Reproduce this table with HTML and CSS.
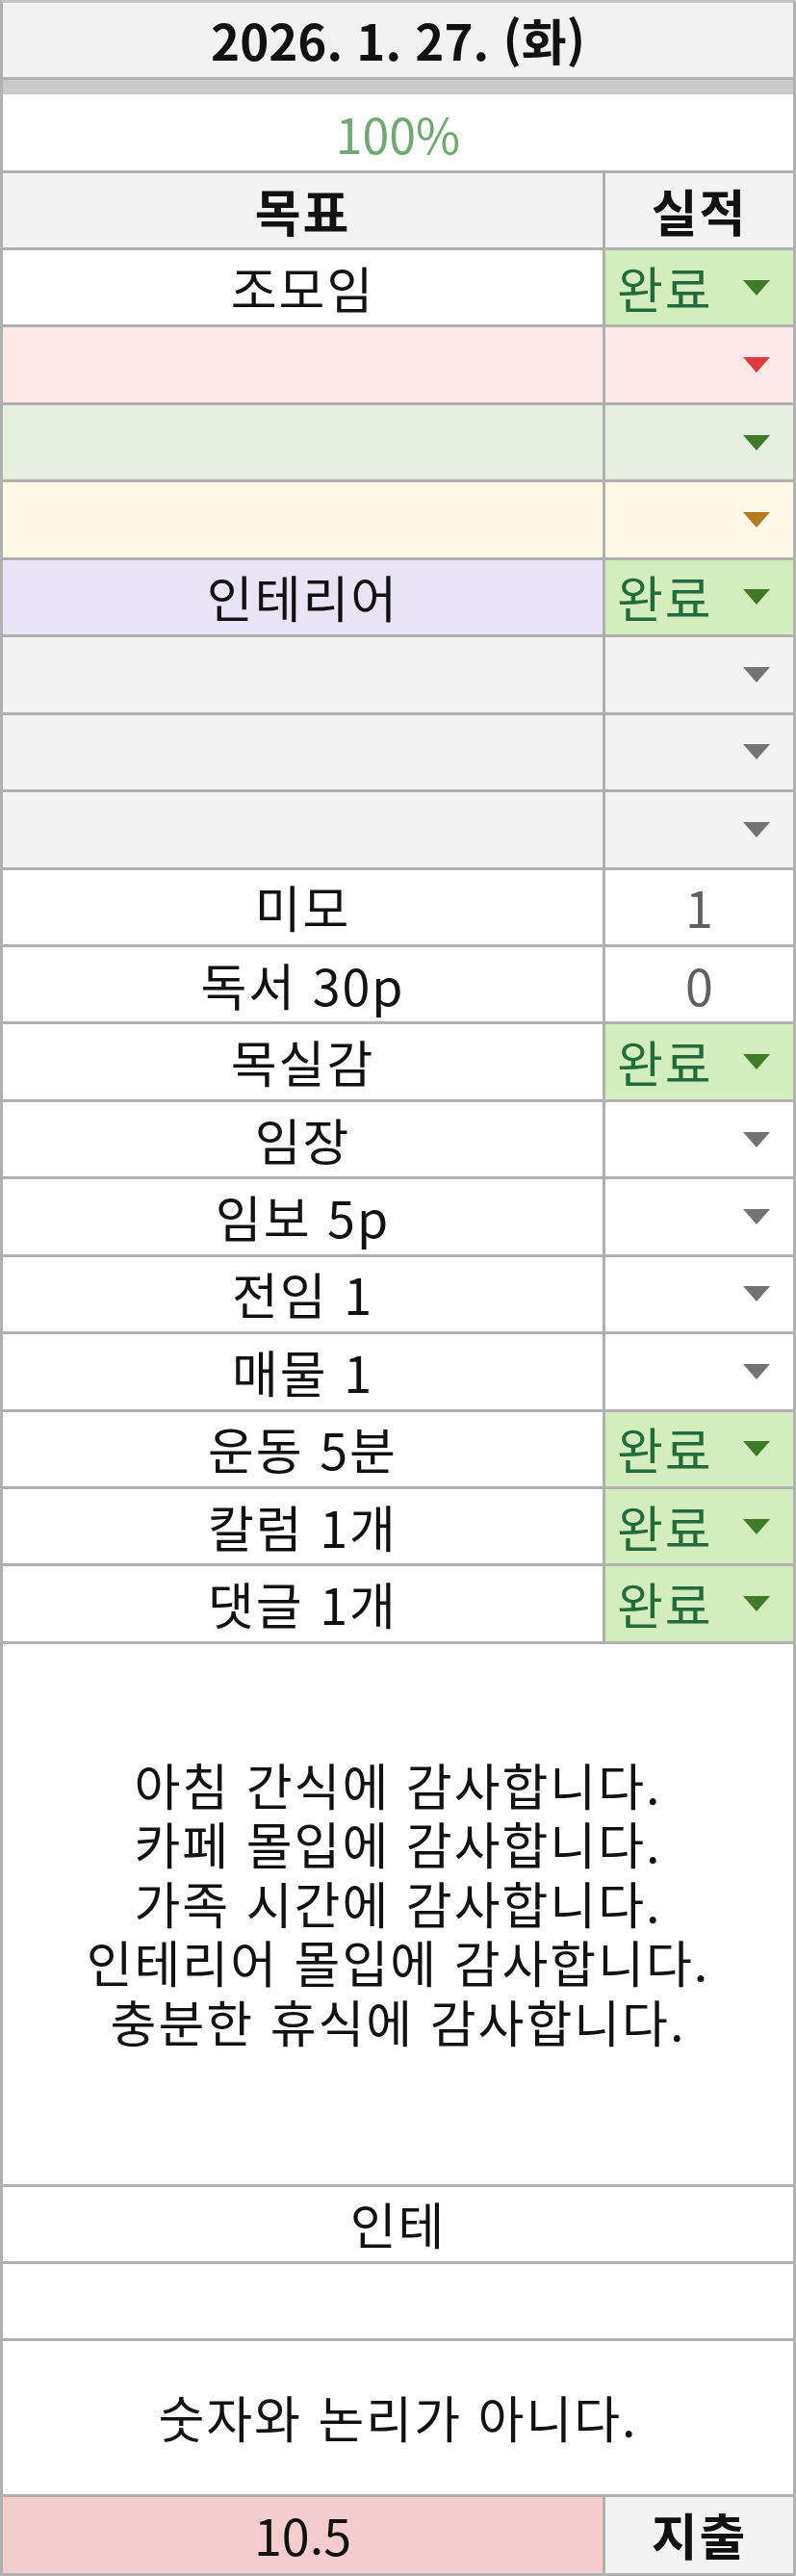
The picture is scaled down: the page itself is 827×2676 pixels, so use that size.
FILE: index.html
```html
<!DOCTYPE html>
<html lang="ko">
<head>
<meta charset="utf-8">
<title>2026. 1. 27. (화)</title>
<link rel="stylesheet" href="styles.css">
</head>
<body>
<div class="sheet">
  <div class="title">2026. 1. 27. (화)</div>
  <div class="band"></div>
  <div class="pct">100%</div>
  <div class="row head">
    <div class="left">목표</div>
    <div class="right center">실적</div>
  </div>

  <div class="row">
    <div class="left">조모임</div>
    <div class="right chip-done"><span class="done">완료</span><span class="tri tri-green"></span></div>
  </div>
  <div class="row pink">
    <div class="left"></div>
    <div class="right"><span class="tri tri-red"></span></div>
  </div>
  <div class="row mint">
    <div class="left"></div>
    <div class="right"><span class="tri tri-green"></span></div>
  </div>
  <div class="row cream">
    <div class="left"></div>
    <div class="right"><span class="tri tri-brown"></span></div>
  </div>
  <div class="row lav">
    <div class="left">인테리어</div>
    <div class="right chip-done"><span class="done">완료</span><span class="tri tri-green"></span></div>
  </div>
  <div class="row grey">
    <div class="left"></div>
    <div class="right"><span class="tri"></span></div>
  </div>
  <div class="row grey">
    <div class="left"></div>
    <div class="right"><span class="tri"></span></div>
  </div>
  <div class="row grey">
    <div class="left"></div>
    <div class="right"><span class="tri"></span></div>
  </div>
  <div class="row">
    <div class="left">미모</div>
    <div class="right center num">1</div>
  </div>
  <div class="row">
    <div class="left">독서 30p</div>
    <div class="right center num">0</div>
  </div>
  <div class="row">
    <div class="left">목실감</div>
    <div class="right chip-done"><span class="done">완료</span><span class="tri tri-green"></span></div>
  </div>
  <div class="row">
    <div class="left">임장</div>
    <div class="right"><span class="tri"></span></div>
  </div>
  <div class="row">
    <div class="left">임보 5p</div>
    <div class="right"><span class="tri"></span></div>
  </div>
  <div class="row">
    <div class="left">전임 1</div>
    <div class="right"><span class="tri"></span></div>
  </div>
  <div class="row">
    <div class="left">매물 1</div>
    <div class="right"><span class="tri"></span></div>
  </div>
  <div class="row">
    <div class="left">운동 5분</div>
    <div class="right chip-done"><span class="done">완료</span><span class="tri tri-green"></span></div>
  </div>
  <div class="row">
    <div class="left">칼럼 1개</div>
    <div class="right chip-done"><span class="done">완료</span><span class="tri tri-green"></span></div>
  </div>
  <div class="row">
    <div class="left">댓글 1개</div>
    <div class="right chip-done"><span class="done">완료</span><span class="tri tri-green"></span></div>
  </div>

  <div class="block thanks">
    <p>아침 간식에 감사합니다.<br>카페 몰입에 감사합니다.<br>가족 시간에 감사합니다.<br>인테리어 몰입에 감사합니다.<br>충분한 휴식에 감사합니다.</p>
  </div>
  <div class="block line">인테</div>
  <div class="block line"></div>
  <div class="block quote">숫자와 논리가 아니다.</div>
  <div class="row foot">
    <div class="left expense">10.5</div>
    <div class="right center bold">지출</div>
  </div>
</div>
</body>
</html>
```

FILE: styles.css
```css
* { box-sizing: border-box; }

html, body {
  margin: 0;
  padding: 0;
  background: #ffffff;
}

body {
  font-family: "Noto Sans CJK KR", "Noto Sans", sans-serif;
  font-size: 52px;
  letter-spacing: 2px;
  color: #111111;
}

.sheet {
  width: 827px;
  border-left: 3px solid #b0b0b0;
  border-right: 3px solid #b0b0b0;
  border-top: 3px solid #c4c4c4;
}

.title {
  height: 80px;
  background: #f2f2f2;
  border-bottom: 3px solid #b0b0b0;
  display: flex;
  align-items: center;
  justify-content: center;
  font-size: 51px;
  letter-spacing: 0;
  font-weight: 700;
  line-height: 1;
}

.band {
  height: 15px;
  background: #c9c9c9;
}

.pct {
  height: 82px;
  border-bottom: 3px solid #b0b0b0;
  display: flex;
  align-items: center;
  justify-content: center;
  color: #6fa870;
  font-size: 50px;
  letter-spacing: 0;
  line-height: 1;
}

.row {
  display: grid;
  grid-template-columns: 626px 195px;
  height: 80.45px;
  border-bottom: 3px solid #b0b0b0;
}

.row.head { height: 80px; }

.left {
  border-right: 3px solid #b0b0b0;
  display: flex;
  align-items: center;
  justify-content: center;
  line-height: 1;
}

.right {
  display: flex;
  align-items: center;
  padding: 0 24px 0 12px;
  line-height: 1;
}

.right.center { justify-content: center; padding: 0; }

.head { background: #f3f3f3; font-weight: 700; }

.num { color: #5f5f5f; letter-spacing: 0; }

.chip-done { background: #d4edbc; }

.done { color: #226b3c; }

.tri {
  margin-left: auto;
  width: 0;
  height: 0;
  border-left: 14px solid transparent;
  border-right: 14px solid transparent;
  border-top: 16px solid #737373;
}

.tri-green { border-top-color: #3f7a2a; }
.tri-red { border-top-color: #e0393e; }
.tri-brown { border-top-color: #b57a1e; }

.pink { background: #fce8e7; }
.mint { background: #e5efdf; }
.cream { background: #fff8e6; }
.lav .left { background: #e8e4f5; }
.grey { background: #f3f3f3; }

.block {
  border-bottom: 3px solid #b0b0b0;
  display: flex;
  flex-direction: column;
  align-items: center;
  justify-content: center;
  text-align: center;
}

.thanks {
  height: 564px;
  padding-bottom: 24px;
}

.thanks p {
  margin: 0;
  line-height: 61.5px;
}

.line {
  height: 80px;
  line-height: 1;
}

.quote {
  height: 162px;
  line-height: 1;
}

.foot { height: 82px; border-bottom: 3px solid #b0b0b0; }

.expense { background: #f4cccc; letter-spacing: 0; }

.foot .right { background: #f3f3f3; }

.bold { font-weight: 700; }
```
